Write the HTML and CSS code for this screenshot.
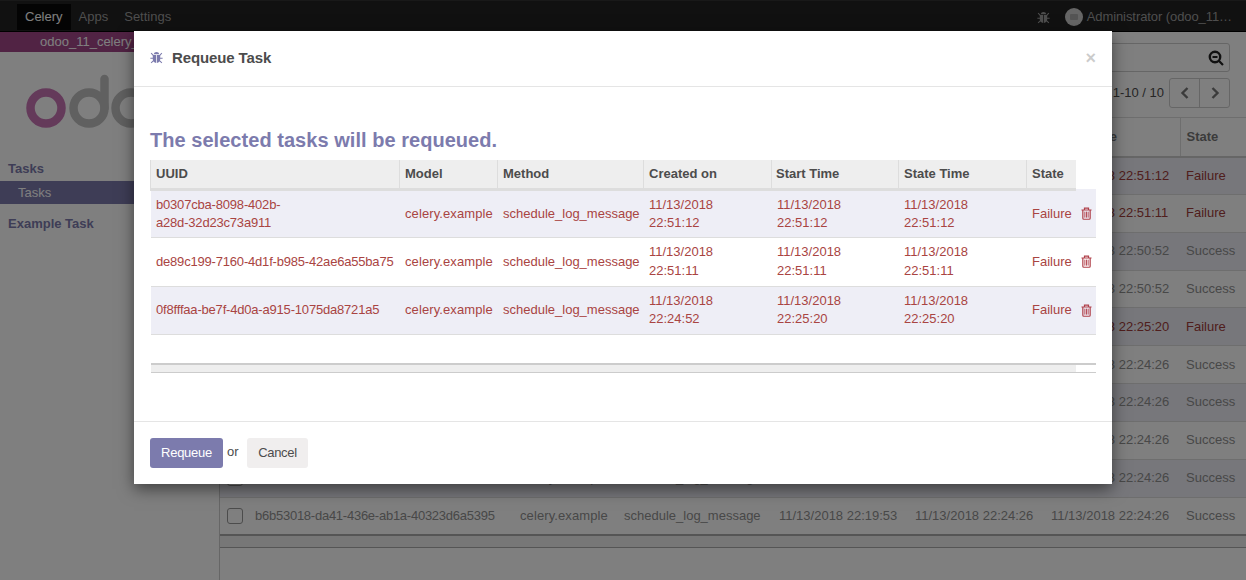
FILE: index.html
```html
<!DOCTYPE html>
<html lang="en">
<head>
<meta charset="utf-8">
<title>Requeue Task</title>
<link rel="stylesheet" href="styles.css">
</head>
<body>
<svg class="defs" width="0" height="0" aria-hidden="true">
  <symbol id="bug" viewBox="0 0 14 14">
    <path d="M4.2 3.4C4.3 1.9 5.5 1 7 1s2.7.9 2.8 2.4z"/>
    <path d="M3 4.2h3.6v8.8C4.4 12.7 3 11.2 3 9zM7.4 4.2H11V9c0 2.2-1.4 3.7-3.6 4z"/>
    <path d="M1.2 2.2 3.6 4.6M12.8 2.2 10.4 4.6M.4 7.8h3M10.6 7.8h3M1.2 12.8l2.6-2.5M12.8 12.8l-2.6-2.5" fill="none" stroke="currentColor" stroke-width="1.1"/>
  </symbol>
  <symbol id="trash" viewBox="0 0 12 14">
    <path d="M.5 3.2h11M3.8 3V1.2h4.4V3M2 3.2v9c0 .6.4 1.1 1 1.1h6c.6 0 1-.5 1-1.1v-9" fill="none" stroke="currentColor" stroke-width="1.3"/>
    <path d="M4.2 5v6.5M6 5v6.5M7.8 5v6.5" fill="none" stroke="currentColor" stroke-width="1"/>
  </symbol>
</svg>

<div class="app">
  <header class="navbar">
    <nav class="nav-left">
      <a class="nav-item active">Celery</a>
      <a class="nav-item">Apps</a>
      <a class="nav-item">Settings</a>
    </nav>
    <div class="nav-right">
      <svg class="nav-bug"><use href="#bug"/></svg>
      <span class="avatar"><span class="avatar-dot"></span></span>
      <span class="user">Administrator (odoo_11…</span>
    </div>
  </header>
  <div class="main">
    <aside class="sidebar">
      <div class="dbbar">odoo_11_celery_example</div>
      <svg class="logo" viewBox="0 0 130 60" width="130" height="60" aria-label="odoo">
        <circle class="logo-o" cx="20" cy="36" r="15.5"/>
        <circle class="logo-g" cx="63" cy="36" r="15.5"/>
        <path class="logo-g" d="M78.5 36V7" stroke-linecap="round"/>
        <circle class="logo-g" cx="105" cy="36" r="15.5"/>
      </svg>
      <div class="menu-head">Tasks</div>
      <div class="menu-item">Tasks</div>
      <div class="menu-head second">Example Task</div>
    </aside>
    <section class="content">
      <div class="cp">
        <div class="search"><svg class="search-icon" viewBox="0 0 16 16"><circle cx="7" cy="7" r="5.2" fill="none" stroke="currentColor" stroke-width="2.4"/><path d="M4.5 7h5M10.8 10.8 15 15" fill="none" stroke="currentColor" stroke-width="2.2"/></svg></div>
        <div class="pager">
          <span class="pager-text">1-10 / 10</span>
          <span class="pager-btns">
            <span class="pager-btn"><svg viewBox="0 0 10 14"><path d="M7.5 2 2.5 7l5 5" fill="none" stroke="currentColor" stroke-width="2.4"/></svg></span>
            <span class="pager-btn"><svg viewBox="0 0 10 14"><path d="m2.5 2 5 5-5 5" fill="none" stroke="currentColor" stroke-width="2.4"/></svg></span>
          </span>
        </div>
      </div>
      <table class="list">
        <thead><tr><th class="lc-check"></th><th class="lc-uuid">UUID</th><th class="lc-model">Model</th><th class="lc-method">Method</th><th class="lc-date">Created on</th><th class="lc-date">Start Time</th><th class="lc-last">State Time</th><th class="lc-state">State</th></tr></thead>
        <tbody>
          <tr class="danger"><td><span class="check"></span></td><td class="uuid">b0307cba-8098-402b-a28d-32d23c73a911</td><td class="model">celery.example</td><td>schedule_log_message</td><td>11/13/2018 22:51:12</td><td>11/13/2018 22:51:12</td><td>11/13/2018 22:51:12</td><td>Failure</td></tr>
          <tr class="danger"><td><span class="check"></span></td><td class="uuid">de89c199-7160-4d1f-b985-42ae6a55ba75</td><td class="model">celery.example</td><td>schedule_log_message</td><td>11/13/2018 22:51:11</td><td>11/13/2018 22:51:11</td><td>11/13/2018 22:51:11</td><td>Failure</td></tr>
          <tr><td><span class="check"></span></td><td class="uuid">5c1d7a02-1a3e-4f6b-9d11-7e3c2b9f4a10</td><td class="model">celery.example</td><td>schedule_log_message</td><td>11/13/2018 22:50:52</td><td>11/13/2018 22:50:52</td><td>11/13/2018 22:50:52</td><td>Success</td></tr>
          <tr><td><span class="check"></span></td><td class="uuid">a2f40b67-33c8-4e19-8a57-0c6de17b2f94</td><td class="model">celery.example</td><td>schedule_log_message</td><td>11/13/2018 22:50:52</td><td>11/13/2018 22:50:52</td><td>11/13/2018 22:50:52</td><td>Success</td></tr>
          <tr class="danger"><td><span class="check"></span></td><td class="uuid">0f8fffaa-be7f-4d0a-a915-1075da8721a5</td><td class="model">celery.example</td><td>schedule_log_message</td><td>11/13/2018 22:24:52</td><td>11/13/2018 22:25:20</td><td>11/13/2018 22:25:20</td><td>Failure</td></tr>
          <tr><td><span class="check"></span></td><td class="uuid">7d26e1c4-90ab-4c37-b2e8-51f3a8d06c72</td><td class="model">celery.example</td><td>schedule_log_message</td><td>11/13/2018 22:20:11</td><td>11/13/2018 22:24:26</td><td>11/13/2018 22:24:26</td><td>Success</td></tr>
          <tr><td><span class="check"></span></td><td class="uuid">39b8f5d0-62e7-47a1-95cc-e8147d2a6b03</td><td class="model">celery.example</td><td>schedule_log_message</td><td>11/13/2018 22:20:05</td><td>11/13/2018 22:24:26</td><td>11/13/2018 22:24:26</td><td>Success</td></tr>
          <tr><td><span class="check"></span></td><td class="uuid">e41c07ba-d5f2-4b88-a6e3-2f9071cb58de</td><td class="model">celery.example</td><td>schedule_log_message</td><td>11/13/2018 22:19:59</td><td>11/13/2018 22:24:26</td><td>11/13/2018 22:24:26</td><td>Success</td></tr>
          <tr><td><span class="check"></span></td><td class="uuid">16ad93f7-c04e-4d52-8b39-a07e6c41d2f8</td><td class="model">celery.example</td><td>schedule_log_message</td><td>11/13/2018 22:19:56</td><td>11/13/2018 22:24:26</td><td>11/13/2018 22:24:26</td><td>Success</td></tr>
          <tr><td><span class="check"></span></td><td class="uuid">b6b53018-da41-436e-ab1a-40323d6a5395</td><td class="model">celery.example</td><td>schedule_log_message</td><td>11/13/2018 22:19:53</td><td>11/13/2018 22:24:26</td><td>11/13/2018 22:24:26</td><td>Success</td></tr>
        </tbody>
        <tfoot><tr><td colspan="8"></td></tr></tfoot>
      </table>
    </section>
  </div>
</div>

<div class="backdrop"></div>

<div class="modal" role="dialog">
  <div class="modal-header">
    <svg class="modal-bug"><use href="#bug"/></svg>
    <h4 class="modal-title">Requeue Task</h4>
    <span class="close">×</span>
  </div>
  <div class="modal-body">
    <h3 class="lead-title">The selected tasks will be requeued.</h3>
    <table class="tasks">
      <colgroup><col class="c1"><col class="c2"><col class="c3"><col class="c4"><col class="c5"><col class="c6"><col class="c7"><col class="c8"></colgroup>
      <thead><tr><th>UUID</th><th>Model</th><th>Method</th><th>Created on</th><th class="th-start">Start Time</th><th>State Time</th><th>State</th></tr></thead>
      <tbody>
        <tr><td class="uuid">b0307cba-8098-402b-<br>a28d-32d23c73a911</td><td class="model">celery.example</td><td>schedule_log_message</td><td>11/13/2018<br>22:51:12</td><td>11/13/2018<br>22:51:12</td><td>11/13/2018<br>22:51:12</td><td>Failure</td><td class="del"><svg class="trash"><use href="#trash"/></svg></td></tr>
        <tr><td class="uuid">de89c199-7160-4d1f-b985-42ae6a55ba75</td><td class="model">celery.example</td><td>schedule_log_message</td><td>11/13/2018<br>22:51:11</td><td>11/13/2018<br>22:51:11</td><td>11/13/2018<br>22:51:11</td><td>Failure</td><td class="del"><svg class="trash"><use href="#trash"/></svg></td></tr>
        <tr><td class="uuid">0f8fffaa-be7f-4d0a-a915-1075da8721a5</td><td class="model">celery.example</td><td>schedule_log_message</td><td>11/13/2018<br>22:24:52</td><td>11/13/2018<br>22:25:20</td><td>11/13/2018<br>22:25:20</td><td>Failure</td><td class="del"><svg class="trash"><use href="#trash"/></svg></td></tr>
      </tbody>
      <tfoot><tr><td colspan="7"></td><td class="foot-end"></td></tr></tfoot>
    </table>
  </div>
  <div class="modal-footer">
    <button class="btn primary">Requeue</button>
    <span class="or">or</span>
    <button class="btn secondary">Cancel</button>
  </div>
</div>
</body>
</html>
```
FILE: styles.css
```css
* { box-sizing: border-box; }
html, body { margin: 0; height: 100%; }
body {
  position: relative;
  width: 1246px;
  height: 580px;
  overflow: hidden;
  background: #fff;
  color: #4c4c4c;
  font: 13px/18px "Liberation Sans", Arial, sans-serif;
}
.defs { position: absolute; }
.app { display: flex; flex-direction: column; height: 580px; }

.navbar {
  display: flex;
  justify-content: space-between;
  align-items: stretch;
  height: 32px;
  flex: none;
  padding: 3px 0 1px 17px;
  background: #222;
  color: #9d9d9d;
  border-top: 1px solid #333;
  border-bottom: 1px solid #000;
}
.nav-left { display: flex; }
.nav-item { display: flex; align-items: center; padding: 0 8px; }
.nav-item.active { background: #090909; color: #fff; }
.nav-right { display: flex; align-items: center; padding-right: 14px; }
.user { letter-spacing: -.08px; }
.nav-bug { width: 13px; height: 13px; margin-right: 15px; color: #9d9d9d; fill: currentColor; }
.avatar { display: flex; width: 18px; height: 18px; margin-right: 4px; border-radius: 50%; background: #ccc; align-items: center; justify-content: center; }
.avatar-dot { width: 8px; height: 6px; background: #aaa; border-radius: 1px; }

.main { display: flex; flex: 1; min-height: 0; }
.sidebar { flex: none; width: 219px; background: #fff; }
.dbbar { height: 20px; padding-left: 40px; background: #a24689; color: #fff; line-height: 20px; white-space: nowrap; }
.logo { display: block; margin: 20px 0 0 26px; fill: none; stroke-width: 8.5; }
.logo-o { stroke: #c974b5; }
.logo-g { stroke: #c0c0c0; }
.menu-head { margin: 28px 0 0 8px; height: 18px; font-weight: 700; color: #7c7bad; line-height: 18px; }
.menu-head.second { margin-top: 11px; }
.menu-item { height: 23px; margin-top: 3px; padding-left: 18px; background: #7c7bad; color: #fff; line-height: 23px; }

.content { flex: 1; min-width: 0; border-left: 1px solid #ccc; background: #fff; }
.cp { height: 85px; padding: 11px 16px 0 0; display: flex; flex-direction: column; align-items: flex-end; }
.search { width: 260px; height: 29px; border: 1px solid #ccc; border-radius: 3px; display: flex; justify-content: flex-end; align-items: center; padding-right: 5px; background: #fff; }
.search-icon { width: 16px; height: 16px; color: #222; }
.pager { display: flex; align-items: center; margin-top: 6px; gap: 5px; }
.pager-btns { display: flex; border: 1px solid #ccc; border-radius: 3px; height: 30px; }
.pager-btn { width: 29px; display: flex; align-items: center; justify-content: center; color: #777; }
.pager-btn + .pager-btn { width: 30px; border-left: 1px solid #ccc; }
.pager-btn svg { width: 10px; height: 14px; }

.list { width: 1026px; border-collapse: collapse; table-layout: fixed; white-space: nowrap; color: #909090; }
.list th { height: 39px; padding: 0 6px; text-align: left; background: #fff; color: #777; border-top: 1px solid #ddd; border-bottom: 2px solid #ccc; border-right: 1px solid #ddd; }
.list th:last-child { border-right: 0; }
.list td { height: 37.85px; padding: 0 6px; border-top: 1px solid #ddd; overflow: hidden; }
.list tbody tr:nth-child(odd) { background: #eeeef6; }
.list tr.danger td { color: #a03c3a; }
.list tfoot td { height: 13px; padding: 0; background: #eee; border-top: 2px solid #aaa; border-bottom: 1px solid #aaa; }
.lc-check { width: 29px; }
.lc-uuid { width: 265px; }
.lc-model { width: 104px; }
.lc-method { width: 155px; }
.lc-date { width: 136px; }
.lc-last { width: 135px; }
.lc-state { width: 66px; }
.check { display: block; width: 16px; height: 16px; margin-left: 1px; border: 1px solid #999; border-radius: 3px; background: #fff; }
.uuid { letter-spacing: -.25px; }
.model { letter-spacing: .1px; }

.backdrop { position: absolute; inset: 0; background: rgba(0, 0, 0, .5); }

.modal {
  position: absolute;
  left: 134px;
  top: 31px;
  width: 978px;
  height: 453px;
  display: flex;
  flex-direction: column;
  background: #fff;
  box-shadow: 0 5px 15px rgba(0, 0, 0, .5);
}
.modal-header { display: flex; align-items: center; height: 56px; flex: none; padding: 0 16px 2px; border-bottom: 1px solid #e5e5e5; }
.modal-bug { width: 13px; height: 13px; margin-right: 9px; color: #7c7bad; fill: currentColor; }
.modal-title { flex: 1; margin: 0; font-size: 15px; line-height: 20px; font-weight: 700; color: #4c4c4c; letter-spacing: -.12px; }
.close { font-size: 18px; font-weight: 700; color: #000; opacity: .2; line-height: 18px; }
.modal-body { flex: 1; padding: 42px 16px 0 16px; min-height: 0; }
.lead-title { margin: 0 0 9px; font-size: 20px; line-height: 22px; font-weight: 700; color: #7c7bad; letter-spacing: .04px; }

.tasks { width: 945px; border-collapse: collapse; table-layout: fixed; }
.c1 { width: 249px; }
.c2 { width: 98px; }
.c3 { width: 146px; }
.c4 { width: 128px; }
.c5 { width: 127px; }
.c6 { width: 128px; }
.c7 { width: 49px; }
.c8 { width: 20px; }
.tasks th { height: 29.4px; padding: 0 5px; text-align: left; font-weight: 700; background: #eee; border-right: 1px solid #ddd; border-bottom: 3px solid #ddd; }
.tasks th:first-child { border-left: 1px solid #ddd; }
.tasks th:nth-child(7) { border-right: 0; }
.tasks .th-start { padding-left: 4px; }
.tasks td { height: 48.4px; padding: 0 5.5px; line-height: 18.57px; color: #a94442; border-bottom: 1px solid #ddd; white-space: nowrap; }
.tasks .uuid { letter-spacing: -.19px; }
.tasks tbody tr:nth-child(odd) { background: #eeeef6; }
.tasks .del { padding: 0; text-align: left; }
.trash { display: block; width: 11px; height: 13px; margin-left: 5px; color: #b0404a; }
.tasks tfoot td { height: 9px; padding: 0; background: #eee; border-top: 2px solid #ccc; border-bottom: 1px solid #ccc; }
.tasks tfoot .foot-end { background: #fff; }
.tasks tbody::after { content: ""; display: table-row; height: 29px; }

.modal-footer { display: flex; align-items: center; height: 63px; flex: none; padding: 0 16px; border-top: 1px solid #e5e5e5; }
.btn { height: 30px; padding: 0; border: 0; border-radius: 3px; font: inherit; }
.primary { width: 73px; background: #7c7bad; color: #fff; letter-spacing: -.28px; }
.secondary { width: 61px; background: #f0eeee; color: #4c4c4c; letter-spacing: -.33px; }
.or { width: 24px; padding-left: 4px; margin-top: -3px; }
```
